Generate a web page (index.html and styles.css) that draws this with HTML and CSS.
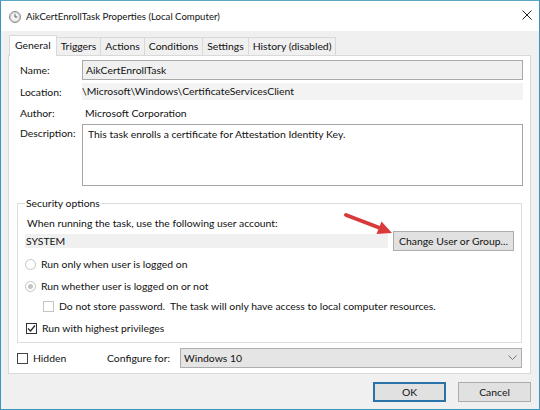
FILE: index.html
```html
<!DOCTYPE html>
<html>
<head>
<meta charset="utf-8">
<link rel="stylesheet" href="styles.css">
</head>
<body>
<div class="window">
  <div class="titlebar">
    <svg class="appicon" width="12" height="12" viewBox="0 0 12 12">
      <circle cx="6" cy="6" r="5.5" fill="#d6d6d6" stroke="#8a8a8a" stroke-width="1"/>
      <circle cx="6" cy="6" r="3.8" fill="#f4f4f4"/>
      <path d="M6 3.2 V6 H8.3" fill="none" stroke="#555" stroke-width="1"/>
    </svg>
    <span class="title">AikCertEnrollTask Properties (Local Computer)</span>
    <svg class="close" width="10" height="10" viewBox="0 0 10 10">
      <path d="M0.5 0.5 L9.5 9.5 M9.5 0.5 L0.5 9.5" stroke="#222" stroke-width="1"/>
    </svg>
  </div>
  <div class="body">
    <div class="tabs">
      <div class="tab active">General</div>
      <div class="tab">Triggers</div>
      <div class="tab">Actions</div>
      <div class="tab">Conditions</div>
      <div class="tab">Settings</div>
      <div class="tab">History (disabled)</div>
    </div>
    <div class="panel">
      <div class="fields">
        <div class="lbl lbl-name">Name:</div>
        <div class="input ro">AikCertEnrollTask</div>
        <div class="lbl lbl-loc">Location:</div>
        <div class="strip">\Microsoft\Windows\CertificateServicesClient</div>
        <div class="lbl lbl-auth">Author:</div>
        <div class="plain">Microsoft Corporation</div>
        <div class="lbl lbl-desc">Description:</div>
        <div class="textarea">This task enrolls a certificate for Attestation Identity Key.</div>
      </div>
      <fieldset class="group">
        <legend>Security options</legend>
        <div class="account-label">When running the task, use the following user account:</div>
        <div class="account-row">
          <div class="account">SYSTEM</div>
          <div class="btn change">Change User or Group...</div>
        </div>
        <div class="opt opt1"><span class="radio"></span><span>Run only when user is logged on</span></div>
        <div class="opt opt2"><span class="radio on"></span><span>Run whether user is logged on or not</span></div>
        <div class="opt opt3"><span class="check dis"></span><span>Do not store password.&nbsp; The task will only have access to local computer resources.</span></div>
        <div class="opt opt4"><span class="check checked"><svg width="9" height="9" viewBox="0 0 9 9"><path d="M1 4.5 L3.5 7 L8 1.5" fill="none" stroke="#222" stroke-width="1.2"/></svg></span><span>Run with highest privileges</span></div>
      </fieldset>
      <div class="bottom-row">
        <div class="hidden-opt"><span class="check"></span><span>Hidden</span></div>
        <div class="cfg-label">Configure for:</div>
        <div class="select"><span>Windows 10</span>
          <svg width="9" height="6" viewBox="0 0 9 6"><path d="M0.5 0.5 L4.5 4.5 L8.5 0.5" fill="none" stroke="#777" stroke-width="1"/></svg>
        </div>
      </div>
    </div>
    <div class="buttons">
      <div class="btn dlg default">OK</div>
      <div class="btn dlg">Cancel</div>
    </div>
  </div>
  <svg class="arrow" width="60" height="30" viewBox="340 208 60 30">
    <path d="M346 215 L380 228" stroke="#d83a3a" stroke-width="4" stroke-linecap="round"/>
    <polygon points="392,233 376.5,234 381.5,221.5" fill="#d83a3a"/>
  </svg>
</div>
</body>
</html>
```

FILE: styles.css
```css
* { box-sizing: border-box; }
html, body { margin: 0; padding: 0; }
body {
  width: 540px;
  height: 410px;
  font-family: "Lato", "Noto Sans", sans-serif;
  font-size: 10.4px;
  color: #111;
  background: #fff;
}
.window {
  position: relative;
  width: 540px;
  height: 410px;
  border: 1px solid #3a96bd;
  border-top-color: #5aa7c8;
  background: #f0f0f0;
  display: flex;
  flex-direction: column;
}
.titlebar {
  height: 30px;
  background: #fff;
  display: flex;
  align-items: center;
  padding-left: 8px;
  padding-right: 7px;
}
.appicon { flex: none; margin-top: 1px; }
.title { margin-left: 5px; font-size: 9.6px; color: #111; flex: 1; }
.close { flex: none; margin-top: -3px; }
.body {
  flex: 1;
  padding: 4px 8px 0 7px;
  display: flex;
  flex-direction: column;
}
.tabs {
  display: flex;
  height: 20px;
  padding-left: 1px;
  position: relative;
  z-index: 1;
}
.tab {
  margin-top: 2px;
  height: 18px;
  line-height: 16px;
  padding: 0 4px;
  border: 1px solid #d9d9d9;
  border-bottom: none;
  background: #f0f0f0;
  margin-left: -1px;
  white-space: nowrap;
}
.tab.active {
  margin-top: 0;
  margin-left: 0;
  height: 21px;
  background: #fff;
  line-height: 18px;
  padding: 0 5px;
  position: relative;
  z-index: 2;
}
.panel {
  height: 319px;
  background: #fff;
  border: 1px solid #d9d9d9;
  padding: 4px 8px 0 8px;
  display: flex;
  flex-direction: column;
}
.fields {
  display: grid;
  grid-template-columns: 62px 1fr;
  margin-left: 3px;
  margin-right: -1px;
  align-items: center;
}
.lbl { white-space: nowrap; }
.input {
  height: 20px;
  line-height: 18px;
  border: 1px solid #a9a9a9;
  background: #f0f0f0;
  padding-left: 3px;
}
.strip {
  margin-top: 3px;
  height: 17px;
  line-height: 17px;
  background: #f3f3f3;
}
.lbl-loc { margin-top: 3px; }
.plain {
  margin-top: 4px;
  height: 18px;
  line-height: 18px;
  padding-left: 3px;
}
.lbl-auth { margin-top: 4px; }
.textarea {
  margin-top: 2px;
  height: 62px;
  border: 1px solid #a5a5a5;
  background: #fff;
  padding: 1px 5px;
  line-height: 17px;
}
.lbl-desc { align-self: start; margin-top: 3px; line-height: 17px; }
.group {
  margin: 9px 0 0 0;
  border: 1px solid #dcdcdc;
  padding: 0 7px 4px 7px;
  min-width: 0;
}
.group legend {
  padding: 0 1px;
  line-height: 16px;
}
.account-label {
  margin-top: 4px;
  padding-left: 2px;
  line-height: 16px;
}
.account-row {
  display: flex;
  align-items: center;
  gap: 5px;
}
.account {
  flex: 1;
  height: 14px;
  line-height: 14px;
  background: #f0f0f0;
  padding-left: 1px;
}
.btn {
  background: #e1e1e1;
  border: 1px solid #adadad;
  text-align: center;
  white-space: nowrap;
}
.change {
  width: 121px;
  height: 20px;
  line-height: 18px;
}
.opt {
  display: flex;
  align-items: center;
  height: 20px;
  gap: 5px;
  white-space: nowrap;
}
.opt1 { margin-top: 3px; }
.opt2 { margin-top: 2px; }
.opt3 { margin-left: 18px; }
.opt4 { margin-top: 2px; margin-left: 1px; }
.radio {
  width: 11px;
  height: 11px;
  border-radius: 50%;
  border: 1px solid #c4c4c4;
  background: #fff;
  position: relative;
  flex: none;
}
.radio.on::after {
  content: "";
  position: absolute;
  left: 2px;
  top: 2px;
  width: 5px;
  height: 5px;
  border-radius: 50%;
  background: #c4c4c4;
}
.check {
  width: 11px;
  height: 11px;
  border: 1px solid #333;
  background: #fff;
  flex: none;
  display: flex;
  align-items: center;
  justify-content: center;
}
.check.dis { border-color: #c4c4c4; }
.check svg { display: block; }
.bottom-row {
  margin-top: 5px;
  display: flex;
  align-items: center;
  height: 20px;
}
.hidden-opt {
  width: 90px;
  display: flex;
  align-items: center;
  gap: 5px;
}
.hidden-opt .check { border-color: #444; }
.cfg-label { width: 73px; white-space: nowrap; }
.select {
  flex: 1;
  height: 20px;
  background: #e5e5e5;
  border: 1px solid #adadad;
  display: flex;
  align-items: center;
  justify-content: space-between;
  padding: 0 4px 0 3px;
}
.buttons {
  margin-top: 8px;
  display: flex;
  justify-content: flex-end;
  gap: 12px;
}
.dlg {
  width: 73px;
  height: 20px;
  line-height: 18px;
}
.dlg.default {
  border: 2px solid #2a72aa;
  line-height: 16px;
}
.arrow {
  position: absolute;
  left: 339px;
  top: 207px;
}
```
